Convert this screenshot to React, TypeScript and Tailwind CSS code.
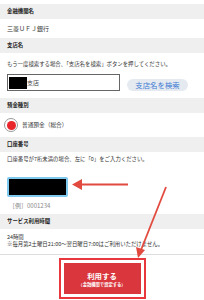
import React from 'react';

const font = { fontFamily: '"Noto Sans CJK JP", "Noto Sans", sans-serif' };

function SectionHead({ label }: { label: string }) {
  return (
    <div className="h-[15px] bg-[#efefef] flex items-center px-[7px] text-[5.4px] font-bold text-[#222]">
      {label}
    </div>
  );
}

export default function App() {
  return (
    <div className="relative w-[204px] h-[300px] bg-white overflow-hidden text-[#333]" style={font}>
      <div className="h-[4px]" />
      <SectionHead label="金融機関名" />
      <div className="h-[19px] flex items-center px-[7px] text-[6px]">三菱ＵＦＪ銀行</div>
      <SectionHead label="支店名" />
      <div className="h-[19px] flex items-end pb-[4px] px-[7px] text-[5.4px]">
        もう一度検索する場合、「支店名を検索」ボタンを押してください。
      </div>
      <div className="flex items-end px-[7px] h-[19px]">
        <div className="w-[113px] h-[17px] border border-[#666] flex items-center pl-[1px]">
          <div className="w-[18px] h-[12px] bg-black" />
          <span className="text-[6px] text-[#444]">支店</span>
        </div>
        <div className="ml-[7px] w-[61px] h-[12px] rounded-full bg-[#e5eaf1] flex items-center justify-center text-[7.4px] text-[#3d7bd1]">
          支店名を検索
        </div>
      </div>
      <div className="h-[7px]" />
      <SectionHead label="預金種別" />
      <div className="h-[24px] flex items-center px-[4px]">
        <div className="w-[14px] h-[14px] rounded-full border border-[#999] bg-white flex items-center justify-center">
          <div className="w-[9px] h-[9px] rounded-full bg-[#e8262b]" />
        </div>
        <span className="ml-[4px] text-[5.7px]">普通預金（総合）</span>
      </div>
      <SectionHead label="口座番号" />
      <div className="h-[15px] flex items-center px-[7px] text-[5.4px]">
        口座番号が7桁未満の場合、左に「0」をご入力ください。
      </div>
      <div className="h-[10px]" />
      <div className="px-[7px]">
        <div className="w-[61px] h-[20px] rounded-[2px] border-[2px] border-[#7fc8ee] bg-black" />
      </div>
      <div className="h-[17px] flex items-center px-[9px] text-[6px] text-[#888]">［例］0001234</div>
      <SectionHead label="サービス利用時間" />
      <div className="pt-[5px] px-[7px] text-[5.4px] leading-[7px] h-[25px]">
        <div>24時間</div>
        <div>※毎月第2土曜日21:00～翌日曜日7:00はご利用いただけません。</div>
      </div>
      <div className="h-px bg-[#ddd]" />
      <div className="flex justify-center pt-[3px]">
        <div className="w-[87px] h-[41px] border-[2px] border-[#e8383d] p-[3px] bg-white">
          <div className="w-full h-full bg-[#d9363e] flex flex-col items-center justify-center text-white">
            <span className="text-[7.4px] font-bold leading-[10px]">利用する</span>
            <span className="text-[4.3px] font-bold leading-[6px]">（金融機関で設定する）</span>
          </div>
        </div>
      </div>

      <svg className="absolute left-0 top-0 pointer-events-none" width="204" height="300" viewBox="0 0 204 300">
        <line x1="128" y1="184.5" x2="80" y2="184.5" stroke="#e24a3f" strokeWidth="2" />
        <polygon points="72,184.5 82,179 82,190" fill="#e24a3f" />
        <line x1="166" y1="187" x2="141" y2="250" stroke="#e24a3f" strokeWidth="1.8" />
        <polygon points="138,258 136,247 145,250" fill="#e24a3f" />
      </svg>
    </div>
  );
}
